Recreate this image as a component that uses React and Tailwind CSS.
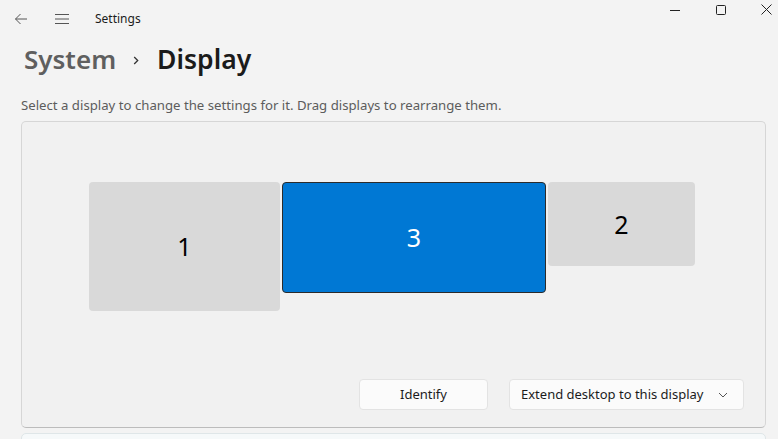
import React from "react";

const font = { fontFamily: '"Noto Sans", "Open Sans", sans-serif' };

const Monitor = ({ label, className }) => (
    <div
        className={`flex shrink-0 items-center justify-center rounded-[4px] text-[25px] ${className}`}
    >
        {label}
    </div>
);

export default function App() {
    return (
        <div
            className="flex h-[439px] w-[778px] flex-col overflow-hidden bg-[#f3f3f3] text-[#1b1b1b]"
            style={font}
        >
            {/* Title bar */}
            <div className="flex h-[38px] shrink-0 items-center">
                <div className="flex w-[40px] justify-center pl-[2px] text-[#555]">
                    <svg width="14" height="14" viewBox="0 0 14 14" fill="none" stroke="currentColor" strokeWidth="1">
                        <path d="M13 7H1.5M6.5 2L1.5 7l5 5" />
                    </svg>
                </div>
                <div className="ml-[2px] flex w-[40px] justify-center text-[#555]">
                    <svg width="16" height="12" viewBox="0 0 16 12" fill="none" stroke="currentColor" strokeWidth="1">
                        <path d="M1 1.5h14M1 6h14M1 10.5h14" />
                    </svg>
                </div>
                <span className="ml-[13px] text-[12px] text-[#1b1b1b]">Settings</span>
                <div className="ml-auto flex self-start pt-[4px]">
                    <div className="flex h-[11px] w-[46px] items-center justify-center">
                        <svg width="10" height="10" viewBox="0 0 10 10" stroke="#222" strokeWidth="1">
                            <path d="M0 5.5h10" />
                        </svg>
                    </div>
                    <div className="flex h-[11px] w-[46px] items-center justify-center">
                        <svg width="10" height="10" viewBox="0 0 10 10" fill="none" stroke="#222" strokeWidth="1">
                            <rect x="0.5" y="0.5" width="9" height="9" rx="1" />
                        </svg>
                    </div>
                    <div className="flex h-[11px] w-[34px] items-center justify-start pl-[17px]">
                        <svg width="11" height="11" viewBox="0 0 11 11" stroke="#222" strokeWidth="1">
                            <path d="M0.5 0.5l10 10M10.5 0.5l-10 10" />
                        </svg>
                    </div>
                </div>
            </div>

            {/* Breadcrumb */}
            <div className="mt-[8px] flex shrink-0 items-center pl-[24px] leading-none">
                <span className="text-[26px] font-semibold text-[#5f5f5f]">System</span>
                <svg className="ml-[17px] mr-[18px] mt-[2px]" width="6" height="9" viewBox="0 0 6 9" fill="none" stroke="#333" strokeWidth="1.3">
                    <path d="M1.2 1l3.5 3.5L1.2 8" />
                </svg>
                <span className="text-[26.5px] font-semibold text-[#1b1b1b]">Display</span>
            </div>

            <p className="mt-[23px] shrink-0 pl-[21px] text-[13.2px] text-[#5c5c5c]">
                Select a display to change the settings for it. Drag displays to rearrange them.
            </p>

            {/* Display arrangement panel */}
            <div className="ml-[21px] mt-[6px] flex h-[307px] w-[745px] shrink-0 flex-col rounded-[5px] border border-[#d6d6d6] border-b-[#bcbcbc] bg-[#f1f1f1]">
                <div className="mt-[60px] flex items-start gap-[2px] pl-[67px]">
                    <Monitor label="1" className="h-[129px] w-[191px] bg-[#d9d9d9] text-black" />
                    <Monitor label="3" className="h-[111px] w-[264px] border border-[#2b2b2b] bg-[#0078d4] text-white" />
                    <Monitor label="2" className="h-[84px] w-[147px] bg-[#d9d9d9] text-black" />
                </div>
                <div className="mt-auto mb-[17px] flex justify-end gap-[21px] pr-[21px]">
                    <button className="h-[31px] w-[129px] rounded-[4px] border border-[#e3e3e3] bg-[#fbfbfb] text-[13px] text-[#1b1b1b]">
                        Identify
                    </button>
                    <button className="flex h-[31px] w-[235px] items-center justify-between rounded-[4px] border border-[#e3e3e3] bg-[#fbfbfb] pl-[11px] pr-[15px] text-[13px] text-[#1b1b1b]">
                        <span>Extend desktop to this display</span>
                        <svg width="10" height="6" viewBox="0 0 10 6" fill="none" stroke="#555" strokeWidth="1">
                            <path d="M1 1l4 4 4-4" />
                        </svg>
                    </button>
                </div>
            </div>

            {/* Next card, cut off */}
            <div className="ml-[21px] mt-[5px] h-[20px] w-[745px] shrink-0 rounded-t-[5px] border border-[#dfe6e8] bg-[#f6f9fa]" />
        </div>
    );
}
